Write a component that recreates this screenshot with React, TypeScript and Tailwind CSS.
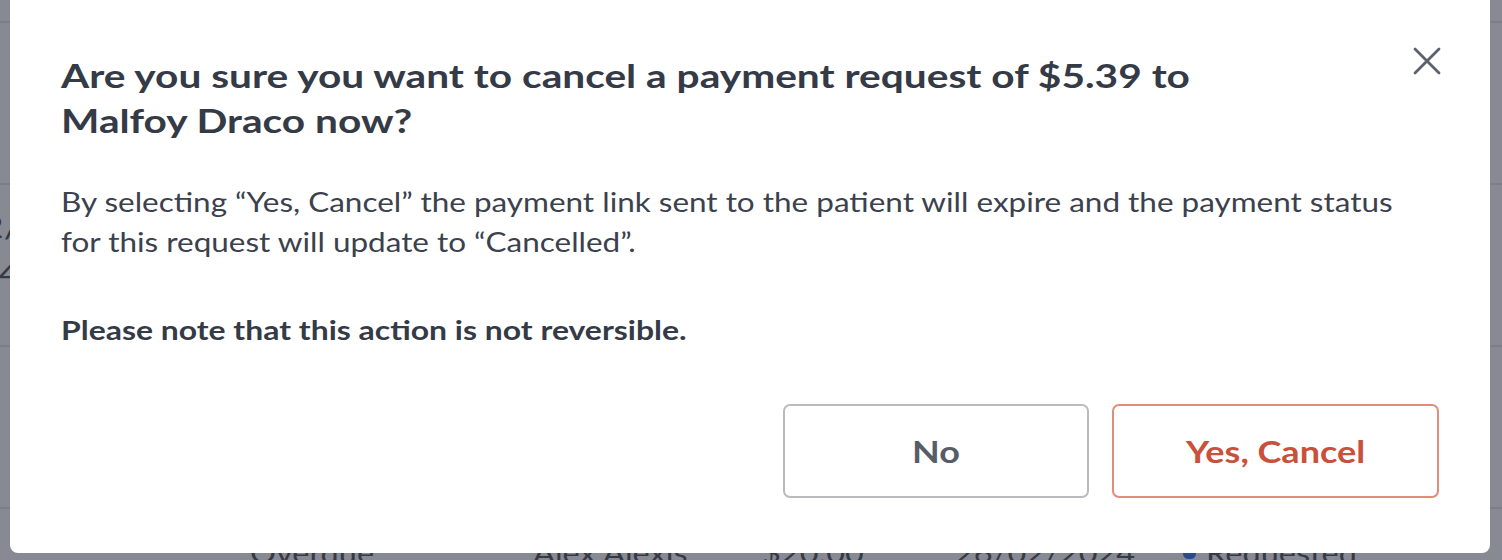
// the reference is a horizontally stretched capture, so text blocks get a scale-x
export default function App() {
  return (
    <div className="relative w-[1502px] h-[560px] overflow-hidden bg-[#878993] font-[Lato,sans-serif] text-[#363a43]">
      {/* Background page (behind overlay) */}
      <div className="flex flex-col">
        <div className="h-[23px] border-b-2 border-[#7b7d87]" />
        <div className="h-[162px] border-b-2 border-[#7b7d87]" />
        <div className="h-[162px] border-b-2 border-[#7b7d87] flex">
          <div className="w-[21px] pt-[18px] flex justify-end">
            <div className="shrink-0 text-right text-[30px] leading-[46px] origin-right scale-x-[1.26]">
              26/02/
              <br />
              2024
            </div>
          </div>
        </div>
        <div className="h-[162px] border-b-2 border-[#7b7d87]" />
        <div className="flex items-center pt-[24px] text-[26px] leading-[40px]">
          <div className="w-[250px] shrink-0" />
          <div className="w-[283px] shrink-0">
            <span className="inline-block origin-left scale-x-[1.25]">Overdue</span>
          </div>
          <div className="w-[229px] shrink-0">
            <span className="inline-block origin-left scale-x-[1.25]">Alex Alexis</span>
          </div>
          <div className="w-[193px] shrink-0">
            <span className="inline-block origin-left scale-x-[1.25]">$20.00</span>
          </div>
          <div className="w-[228px] shrink-0">
            <span className="inline-block origin-left scale-x-[1.25]">26/02/2024</span>
          </div>
          <span className="w-[13px] h-[11px] rounded-full bg-[#2a4a8a] shrink-0" />
          <span className="ml-[10px] inline-block origin-left scale-x-[1.25]">Requested</span>
        </div>
      </div>

      {/* Dialog */}
      <div className="absolute left-[10px] top-[-7px] w-[1480px] h-[560px] rounded-[8px] bg-white pt-[60px] px-[51px]">
        <button
          className="absolute top-[54px] right-[49px] w-[28px] h-[28px]"
          aria-label="Close"
        >
          <svg width="28" height="28" viewBox="0 0 28 28" fill="none">
            <path
              d="M2 2L26 26M26 2L2 26"
              stroke="#5d616b"
              strokeWidth="2.8"
              strokeLinecap="round"
            />
          </svg>
        </button>

        <h2 className="w-[940px] origin-left scale-x-[1.27] text-[32px] leading-[45px] font-bold text-[#343a46]">
          Are you sure you want to cancel a payment request of $5.39 to Malfoy Draco now?
        </h2>

        <p className="w-[1135px] mt-[39px] origin-left scale-x-[1.21] text-[26px] leading-[40px] text-[#3b414d]">
          By selecting “Yes, Cancel” the payment link sent to the patient will expire and the payment status for this request will update to “Cancelled”.
        </p>

        <p className="w-[1090px] mt-[48px] origin-left scale-x-[1.228] text-[26px] leading-[40px] font-bold text-[#343a46]">
          Please note that this action is not reversible.
        </p>

        <div className="mt-[54px] flex justify-end gap-[23px]">
          <button className="w-[306px] h-[94px] rounded-[7px] border-2 border-[#b9bbc1] bg-white text-[30px] font-bold text-[#575c67]">
            <span className="inline-block scale-x-[1.2]">No</span>
          </button>
          <button className="w-[327px] h-[94px] rounded-[7px] border-2 border-[#e28c7a] bg-white text-[30px] font-bold text-[#c9503a]">
            <span className="inline-block scale-x-[1.2]">Yes, Cancel</span>
          </button>
        </div>
      </div>
    </div>
  );
}
